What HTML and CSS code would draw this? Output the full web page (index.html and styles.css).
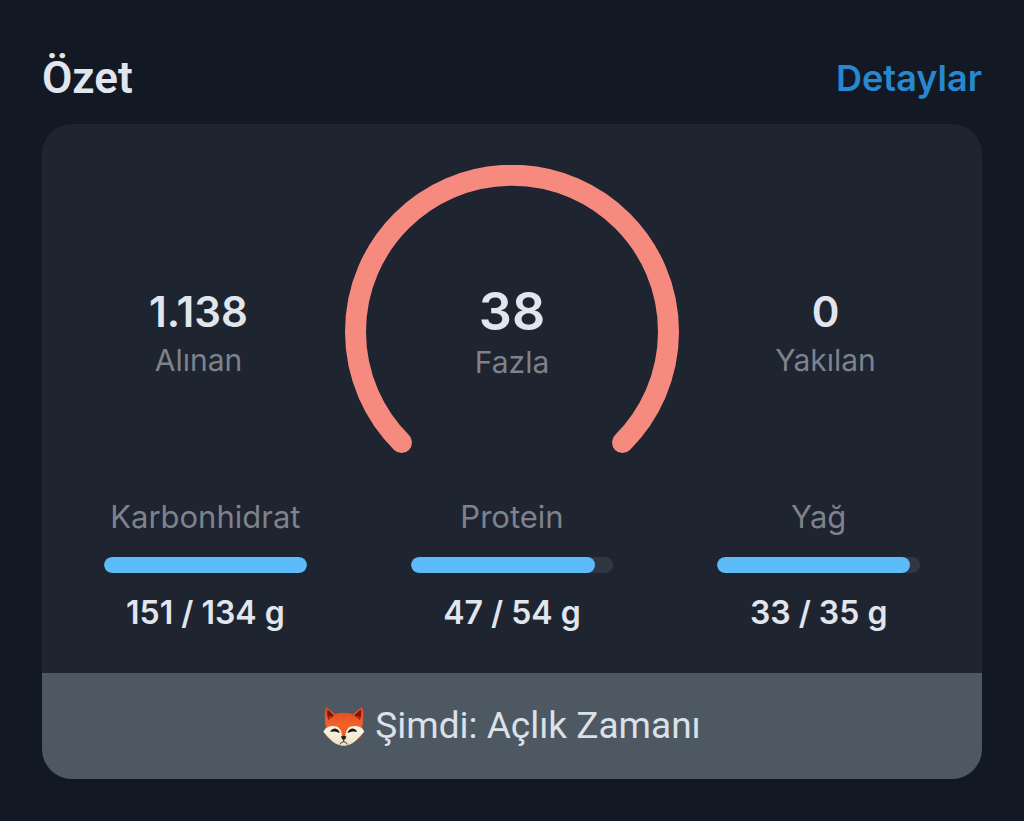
FILE: index.html
```html
<!DOCTYPE html>
<html lang="tr">
<head>
<meta charset="utf-8">
<meta name="viewport" content="width=device-width, initial-scale=1">
<title>Özet</title>
<link rel="stylesheet" href="styles.css">
</head>
<body>
<main class="summary">
  <header class="summary-header">
    <h1 class="title">Özet</h1>
    <a class="details-link" href="#detaylar">Detaylar</a>
  </header>
  <section class="card">
    <div class="card-body">
      <div class="stats">
        <div class="stat">
          <span class="stat-value">1.138</span>
          <span class="label">Alınan</span>
        </div>
        <div class="ring">
          <svg class="ring-arc" viewBox="0 0 334 290" aria-hidden="true">
            <path d="M56.5 277.5A156.5 156.5 0 1 1 277.5 277.5" fill="none" stroke="#f68a7e" stroke-width="21" stroke-linecap="round"/>
          </svg>
          <div class="stat">
            <span class="ring-value">38</span>
            <span class="label">Fazla</span>
          </div>
        </div>
        <div class="stat">
          <span class="stat-value">0</span>
          <span class="label">Yakılan</span>
        </div>
      </div>
      <div class="macros">
        <div class="macro">
          <label class="label macro-label" for="carbs">Karbonhidrat</label>
          <progress class="bar" id="carbs" max="100" value="100"></progress>
          <span class="macro-value">151 / 134 g</span>
        </div>
        <div class="macro">
          <label class="label macro-label" for="protein">Protein</label>
          <progress class="bar" id="protein" max="100" value="91"></progress>
          <span class="macro-value">47 / 54 g</span>
        </div>
        <div class="macro">
          <label class="label macro-label" for="fat">Yağ</label>
          <progress class="bar" id="fat" max="100" value="95"></progress>
          <span class="macro-value">33 / 35 g</span>
        </div>
      </div>
    </div>
    <footer class="card-footer">
      <svg class="fox" viewBox="46 46 126 122" aria-hidden="true">
        <defs>
          <linearGradient id="fur" x1="0" y1="0" x2="0" y2="1">
            <stop offset="0" stop-color="#d94a1c"/>
            <stop offset=".45" stop-color="#f4602a"/>
            <stop offset="1" stop-color="#ee5a20"/>
          </linearGradient>
          <linearGradient id="cheek" x1="0" y1="0" x2="0" y2="1">
            <stop offset="0" stop-color="#fff8e4"/>
            <stop offset="1" stop-color="#e9e2c8"/>
          </linearGradient>
        </defs>
        <path d="M53 54Q53 48 59 51L82 70Q108 62 136 70L159 51Q166 48 166 55Q169 84 163 108L168 124Q150 158 108 162Q66 158 48 124L55 108Q49 84 53 54Z" fill="url(#fur)"/>
        <path d="M59 59Q60 56 63 59L79 74Q70 79 62 87Q57 74 59 59Z" fill="#7c1209"/>
        <path d="M160 59Q159 56 156 59L140 74Q149 79 157 87Q162 74 160 59Z" fill="#7c1209"/>
        <path d="M65 74Q70 78 74 77L63 88Q60 79 65 74Z" fill="#b92b12"/>
        <path d="M153 74Q148 78 145 77L156 88Q159 79 153 74Z" fill="#b92b12"/>
        <path d="M55 112Q69 102 87 107Q101 112 103 135Q108 140 113 135Q115 112 129 107Q149 102 163 112L170 122Q158 137 142 151Q127 164 108 165Q89 164 74 151Q58 137 47 122Z" fill="url(#cheek)"/>
        <path d="M70 121Q84 108 94 124Q82 118 70 121ZM146 121Q132 108 122 124Q134 118 146 121Z" fill="#201510" stroke="#201510" stroke-width="4" stroke-linejoin="round"/>
        <path d="M100 137Q108 133 116 137Q115 145 108 148Q101 145 100 137Z" fill="#2b1b17"/>
        <path d="M108 147V153M97 160Q99 154 108 152Q117 154 119 160" fill="none" stroke="#4b3a32" stroke-width="3" stroke-linecap="round"/>
      </svg>
      <span>Şimdi: Açlık Zamanı</span>
    </footer>
  </section>
</main>
</body>
</html>
```
FILE: styles.css
```css
* {
  box-sizing: border-box;
}

body {
  margin: 0;
  background: #121925;
  color: #e1e6ee;
  font-family: Inter, "Noto Sans", sans-serif;
}

.summary {
  padding: 52px 42px 42px;
}

.summary-header {
  display: flex;
  justify-content: space-between;
  align-items: center;
  margin-bottom: 20px;
}

.title {
  margin: 0;
  font-family: Roboto, sans-serif;
  font-size: 44px;
  line-height: 52px;
  font-weight: 600;
}

.details-link {
  color: #2688cf;
  font-size: 36px;
  line-height: 50px;
  font-weight: 600;
  text-decoration: none;
}

.card {
  border-radius: 30px;
  background: #1e2430;
  overflow: hidden;
}

.card-body {
  padding: 41px 0 38px;
}

.stats {
  display: grid;
  grid-template-columns: 1fr 334px 1fr;
  align-items: center;
  padding: 0 10px;
  margin-bottom: 40px;
}

.stat {
  display: flex;
  flex-direction: column;
  align-items: center;
  padding-top: 48px;
}

.stat-value {
  font-size: 42px;
  line-height: 52px;
  font-weight: 600;
}

.ring {
  display: grid;
  align-items: center;
}

.ring-arc,
.ring .stat {
  grid-area: 1 / 1;
}

.ring-arc {
  display: block;
  width: 100%;
}

.ring-value {
  font-size: 52px;
  line-height: 56px;
  font-weight: 600;
}

.label {
  color: #7d828c;
  font-size: 30px;
  line-height: 44px;
}

.macros {
  display: grid;
  grid-template-columns: repeat(3, 1fr);
  gap: 104px;
  padding: 0 62px;
}

.macro {
  display: flex;
  flex-direction: column;
  align-items: center;
}

.macro-label {
  font-size: 31px;
}

.bar {
  appearance: none;
  display: block;
  width: 100%;
  height: 16px;
  margin: 18px 0;
  border: 0;
  border-radius: 8px;
  background: #303643;
  overflow: hidden;
}

.bar::-webkit-progress-bar {
  background: #303643;
  border-radius: 8px;
}

.bar::-webkit-progress-value {
  background: #5bbcf9;
  border-radius: 8px;
}

.macro-value {
  font-size: 32px;
  line-height: 44px;
  font-weight: 600;
}

.card-footer {
  display: flex;
  justify-content: center;
  align-items: center;
  gap: 10px;
  padding: 28px;
  background: #4e5862;
  color: #dbe1ea;
  font-family: Roboto, sans-serif;
  font-size: 37px;
  line-height: 50px;
}

.fox {
  width: 42px;
  height: 41px;
}
```
